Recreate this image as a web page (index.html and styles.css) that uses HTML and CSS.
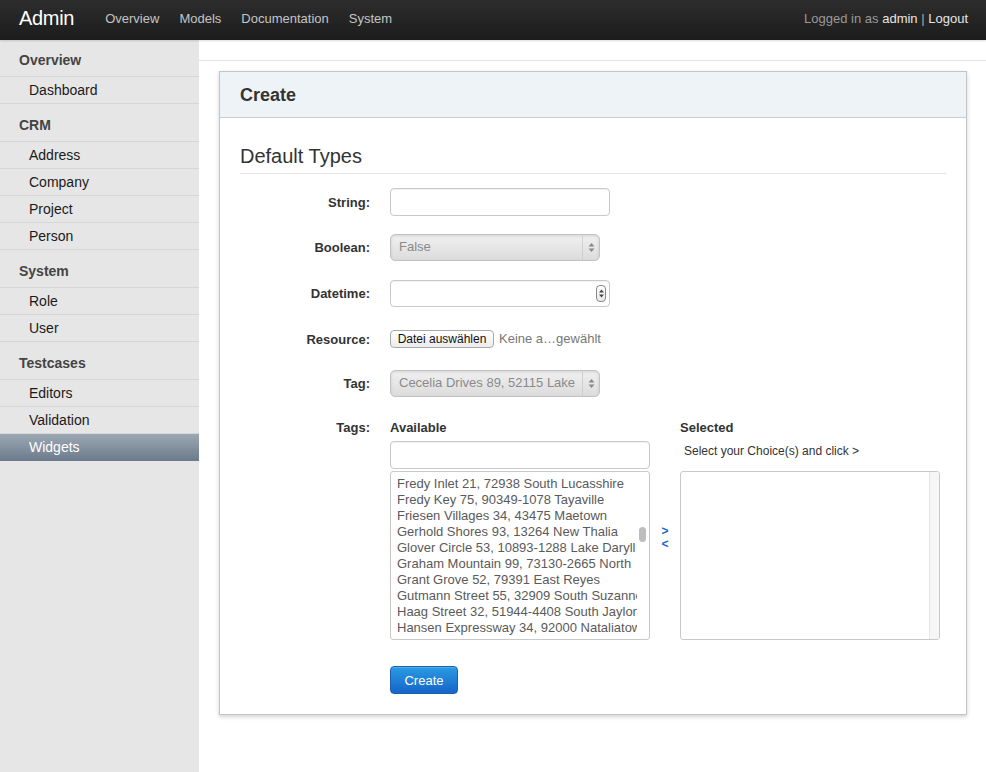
FILE: index.html
```html
<!DOCTYPE html>
<html>
<head>
<meta charset="utf-8">
<link rel="stylesheet" href="styles.css">
</head>
<body>
<header class="navbar">
  <div class="brand">Admin</div>
  <nav class="nav">
    <a>Overview</a>
    <a>Models</a>
    <a>Documentation</a>
    <a>System</a>
  </nav>
  <div class="user">Logged in as <span class="uname">admin</span> <span class="sep">|</span> <span class="logout">Logout</span></div>
</header>
<div class="layout">
  <aside class="sidebar">
    <div class="sb-head first">Overview</div>
    <div class="sb-item">Dashboard</div>
    <div class="sb-head">CRM</div>
    <div class="sb-item">Address</div>
    <div class="sb-item">Company</div>
    <div class="sb-item">Project</div>
    <div class="sb-item">Person</div>
    <div class="sb-head">System</div>
    <div class="sb-item">Role</div>
    <div class="sb-item">User</div>
    <div class="sb-head">Testcases</div>
    <div class="sb-item">Editors</div>
    <div class="sb-item">Validation</div>
    <div class="sb-item active">Widgets</div>
  </aside>
  <main class="main">
    <div class="crumb"></div>
    <section class="panel">
      <div class="panel-head">Create</div>
      <div class="panel-body">
        <div class="legend">Default Types</div>
        <div class="row r-string">
          <label class="lbl">String:</label>
          <div class="input w220"></div>
        </div>
        <div class="row r-bool">
          <label class="lbl">Boolean:</label>
          <div class="select w210"><span class="sel-text">False</span><span class="sel-arrows"><svg width="7" height="11" viewBox="0 0 7 11"><path d="M3.5 1 L6.5 4.5 H0.5 Z M3.5 10 L6.5 6.5 H0.5 Z" fill="#8a8a8a"/></svg></span></div>
        </div>
        <div class="row r-date">
          <label class="lbl">Datetime:</label>
          <div class="input w220 date"><span class="spin"><svg width="7" height="11" viewBox="0 0 7 11"><path d="M3.5 1.5 L6 4.5 H1 Z M3.5 9.5 L6 6.5 H1 Z" fill="#444"/></svg></span></div>
        </div>
        <div class="row r-file">
          <label class="lbl">Resource:</label>
          <div class="file"><span class="file-btn">Datei auswählen</span><span class="file-text">Keine a…gewählt</span></div>
        </div>
        <div class="row r-tag">
          <label class="lbl">Tag:</label>
          <div class="select w210"><span class="sel-text">Cecelia Drives 89, 52115 Lake</span><span class="sel-arrows"><svg width="7" height="11" viewBox="0 0 7 11"><path d="M3.5 1 L6.5 4.5 H0.5 Z M3.5 10 L6.5 6.5 H0.5 Z" fill="#8a8a8a"/></svg></span></div>
        </div>
        <div class="row r-tags">
          <label class="lbl top">Tags:</label>
          <div class="dual">
            <div class="dcol">
              <div class="dhead">Available</div>
              <div class="input filter"></div>
              <div class="listbox">
                <ul class="opts">
                  <li>Fredy Inlet 21, 72938 South Lucasshire</li>
                  <li>Fredy Key 75, 90349-1078 Tayaville</li>
                  <li>Friesen Villages 34, 43475 Maetown</li>
                  <li>Gerhold Shores 93, 13264 New Thalia</li>
                  <li>Glover Circle 53, 10893-1288 Lake Daryll</li>
                  <li>Graham Mountain 99, 73130-2665 North</li>
                  <li>Grant Grove 52, 79391 East Reyes</li>
                  <li>Gutmann Street 55, 32909 South Suzanne</li>
                  <li>Haag Street 32, 51944-4408 South Jaylon</li>
                  <li>Hansen Expressway 34, 92000 Nataliatown</li>
                </ul>
                <div class="track"><div class="thumb"></div></div>
              </div>
            </div>
            <div class="arrows"><span>&gt;</span><span>&lt;</span></div>
            <div class="dcol">
              <div class="dhead">Selected</div>
              <div class="hint">Select your Choice(s) and click &gt;</div>
              <div class="listbox sel"><div class="gutter"></div></div>
            </div>
          </div>
        </div>
        <div class="actions">
          <button class="btn">Create</button>
        </div>
      </div>
    </section>
  </main>
</div>
</body>
</html>
```
FILE: styles.css
```css
* { box-sizing: border-box; }
html, body { margin: 0; padding: 0; }
body {
  font-family: "Liberation Sans", Arial, sans-serif;
  font-size: 13px;
  color: #333;
  background: #fff;
  min-height: 772px;
}
.navbar {
  height: 40px;
  background: linear-gradient(#2d2d2d, #1c1c1c);
  display: flex;
  align-items: center;
  padding: 0 18px 0 19px;
  box-shadow: 0 1px 2px rgba(0,0,0,.15);
  position: relative;
  z-index: 2;
}
.brand {
  color: #fff;
  font-size: 20px;
  letter-spacing: -0.3px;
  margin-right: 21px;
  line-height: 40px;
  position: relative;
  top: -2px;
}
.nav { display: flex; }
.nav a {
  color: #c4c4c4;
  padding: 0 10px;
  font-size: 13px;
  line-height: 40px;
  position: relative;
  top: -1px;
}
.user {
  margin-left: auto;
  color: #999;
  font-size: 13px;
  position: relative;
  top: -2px;
}
.user .uname { color: #e6e6e6; }
.user .sep { color: #aaa; }
.user .logout { color: #e6e6e6; }

.layout { display: flex; min-height: 732px; }
.sidebar {
  width: 199px;
  flex: none;
  background: #e6e6e6;
}
.sb-head {
  font-weight: bold;
  color: #444;
  font-size: 14px;
  padding: 13px 0 0 19px;
  height: 38px;
  border-bottom: 1px solid #d6d6d6;
}
.sb-head.first { height: 37px; padding-top: 12px; }
.sb-item {
  font-size: 14px;
  color: #1a1a1a;
  padding-left: 29px;
  height: 27px;
  line-height: 26px;
  border-bottom: 1px solid #d6d6d6;
}
.sb-item.active {
  background: linear-gradient(#9ca8b3, #6d7c8c);
  color: #fff;
  border-bottom-color: #6d7c8c;
}
.main { flex: 1; padding: 0 19px 0 20px; }
.crumb {
  height: 21px;
  margin: 0 -19px 0 -20px;
  border-bottom: 1px solid #e3e3e3;
}
.panel {
  margin-top: 10px;
  border: 1px solid #c4c4c4;
  box-shadow: 0 2px 4px rgba(0,0,0,.18);
  background: #fff;
}
.panel-head {
  height: 46px;
  background: #eef3f7;
  border-bottom: 1px solid #cdcdcd;
  padding: 13px 0 0 20px;
  font-size: 18px;
  font-weight: bold;
  color: #333;
}
.panel-body { padding: 26px 20px 20px 20px; }
.legend {
  font-size: 20px;
  line-height: 24px;
  color: #333;
  padding-bottom: 5px;
  border-bottom: 1px solid #e5e5e5;
  margin-bottom: 14px;
}
.row { display: flex; align-items: center; gap: 20px; }
.lbl {
  width: 130px;
  text-align: right;
  font-weight: bold;
  color: #333;
  font-size: 13px;
}
.lbl.top { align-self: flex-start; line-height: 16px; }
.r-string { height: 28px; margin-bottom: 18px; }
.r-bool { height: 26px; margin-bottom: 20px; }
.r-date { height: 26px; margin-bottom: 20px; }
.r-file { height: 26px; margin-bottom: 18px; }
.r-tag { height: 26px; margin-bottom: 24px; }
.r-tags { align-items: flex-start; }

.input {
  height: 28px;
  border: 1px solid #c9c9c9;
  border-radius: 4px;
  background: #fff;
  box-shadow: inset 0 1px 1px rgba(0,0,0,.06);
}
.w220 { width: 220px; }
.w210 { width: 210px; }
.r-date .input { height: 27px; }
.date { display: flex; justify-content: flex-end; align-items: center; padding-right: 3px; }
.spin {
  width: 10px; height: 17px;
  border: 1px solid #888;
  border-radius: 4px;
  display: flex; align-items: center; justify-content: center;
  background: linear-gradient(#fff, #e9e9e9);
}
.select {
  height: 27px;
  border: 1px solid #c3c3c3;
  border-radius: 5px;
  background: linear-gradient(#f0f0f0, #dcdcdc);
  box-shadow: inset 0 1px 3px rgba(0,0,0,.12);
  display: flex;
  align-items: center;
  overflow: hidden;
}
.sel-text {
  flex: 1;
  padding-left: 8px;
  color: #8a8a8a;
  font-size: 13px;
  white-space: nowrap;
  overflow: hidden;
  position: relative;
  top: -1px;
}
.sel-arrows {
  width: 17px;
  height: 100%;
  border-left: 1px solid #cfcfcf;
  display: flex; align-items: center; justify-content: center;
  flex: none;
}
.file { display: flex; align-items: center; }
.file-btn {
  height: 18px;
  width: 104px;
  border: 1px solid #a9a9a9;
  border-radius: 4px;
  background: linear-gradient(#fff, #ececec);
  font-size: 12px;
  color: #111;
  display: flex; align-items: center; justify-content: center;
  margin-right: 5px;
}
.file-text { color: #777; font-size: 13px; position: relative; top: -1px; }

.dual { display: flex; }
.dcol { width: 260px; }
.dhead { font-weight: bold; line-height: 16px; color: #333; }
.filter { width: 260px; height: 28px; margin-top: 5px; margin-bottom: 2px; }
.listbox {
  width: 260px;
  height: 169px;
  border: 1px solid #c9c9c9;
  border-radius: 3px;
  position: relative;
  overflow: hidden;
  background: #fff;
}
.opts {
  list-style: none;
  margin: 0;
  padding: 4px 0 0 6px;
  width: 246px;
  overflow: hidden;
}
.opts li {
  white-space: nowrap;
  line-height: 16px;
  color: #5a5a5a;
  font-size: 13px;
  overflow: hidden;
  text-overflow: clip;
}
.track {
  position: absolute;
  right: 0; top: 0; bottom: 0;
  width: 12px;
}
.thumb {
  position: absolute;
  left: 2px; top: 55px;
  width: 7px; height: 15px;
  border-radius: 4px;
  background: #bdbdbd;
}
.arrows {
  width: 30px;
  display: flex;
  flex-direction: column;
  align-items: center;
  padding-top: 105px;
  color: #1a66d0;
  font-weight: bold;
  font-size: 12px;
  line-height: 13px;
}
.hint {
  padding-left: 4px;
  font-size: 12px;
  color: #333;
  line-height: 16px;
  margin-top: 7px;
  margin-bottom: 12px;
}
.listbox.sel .gutter {
  position: absolute;
  right: 0; top: 0; bottom: 0;
  width: 10px;
  background: #f6f6f6;
  border-left: 1px solid #e6e6e6;
}
.actions { padding: 26px 0 0 150px; }
.btn {
  width: 68px;
  height: 28px;
  border: 1px solid #1b5fb3;
  border-radius: 4px;
  background: linear-gradient(#2a9be2, #1665c8);
  color: #fff;
  font-family: "Liberation Sans", Arial, sans-serif;
  font-size: 13px;
  padding: 0;
  box-shadow: inset 0 1px 0 rgba(255,255,255,.2);
}
```
